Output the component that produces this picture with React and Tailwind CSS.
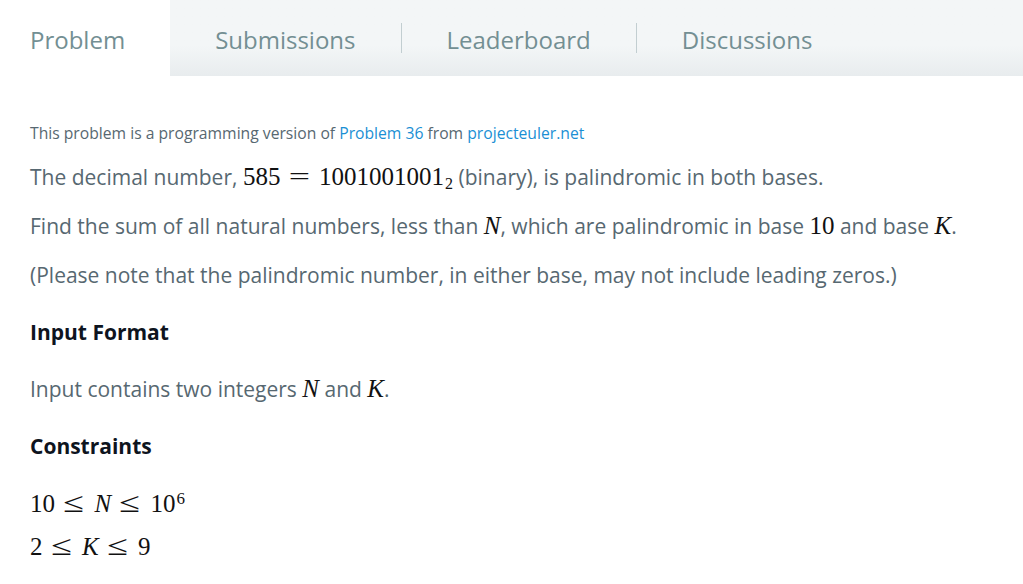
import React from 'react';

const serif = { fontFamily: '"Liberation Serif", "DejaVu Serif", serif' };

const M = ({ children, italic = false }) => (
    <span className={`text-[#111] text-[25px] ${italic ? 'italic' : ''}`} style={serif}>
        {children}
    </span>
);

// relation symbols: stretched wide like KaTeX's glyphs, with thick spacing
const Eq = () => <span className="inline-block text-[26px] leading-none scale-x-[1.45] mx-[12px]">=</span>;
const Leq = () => <span className="inline-block text-[28px] leading-none scale-x-[1.35] ml-[11px] mr-[13px]">≤</span>;

function Tab({ label, active = false, first = false, divider = false }) {
    return (
        <div className={`flex items-center h-full ${active ? 'bg-white' : ''}`}>
            <div className={`${first ? 'pl-[30px] pr-[45px]' : 'px-[45px]'} pt-[3px] text-[24px] text-[#738f93]`}>
                {label}
            </div>
            {divider && <div className="w-px h-[30px] bg-[#c2ced1]"></div>}
        </div>
    );
}

export default function App() {
    return (
        <div className="w-[1023px] h-[584px] bg-white overflow-hidden" style={{ fontFamily: '"Open Sans", sans-serif' }}>
            {/* Tabs */}
            <div className="flex h-[76px] bg-gradient-to-b from-[#f3f6f7] from-60% to-[#e8ecee]">
                <Tab label="Problem" active first />
                <Tab label="Submissions" divider />
                <Tab label="Leaderboard" divider />
                <Tab label="Discussions" />
            </div>

            {/* Body */}
            <div className="px-[30px] pt-[46px] text-[21px] text-[#576871]">
                <p className="text-[15.7px] leading-[22px]">
                    This problem is a programming version of{' '}
                    <span className="text-[#1a8fd4]">Problem 36</span> from{' '}
                    <span className="text-[#1a8fd4]">projecteuler.net</span>
                </p>

                <p className="mt-[13px] leading-[40px]">
                    The decimal number, <M>585<Eq />1001001001<sub className="text-[16px] ml-[1px]">2</sub></M> (binary), is palindromic in both bases.
                </p>
                <p className="mt-[9px] leading-[40px]">
                    Find the sum of all natural numbers, less than <M italic>N</M>, which are palindromic in base <M>10</M> and base <M italic>K</M>.
                </p>
                <p className="mt-[9px] leading-[40px]">
                    (Please note that the palindromic number, in either base, may not include leading zeros.)
                </p>

                <h3 className="mt-[23px] font-bold text-[#0e141e] leading-[28px]">Input Format</h3>

                <p className="mt-[29px] leading-[28px]">
                    Input contains two integers <M italic>N</M> and <M italic>K</M>.
                </p>

                <h3 className="mt-[29px] font-bold text-[#0e141e] leading-[28px]">Constraints</h3>

                <div className="mt-[22px] text-[25px] leading-[43px] text-[#111]" style={serif}>
                    <div>10<Leq /><i>N</i><Leq />10<sup className="text-[17px] ml-[1px]">6</sup></div>
                    <div>2<Leq /><i>K</i><Leq />9</div>
                </div>
            </div>
        </div>
    );
}
